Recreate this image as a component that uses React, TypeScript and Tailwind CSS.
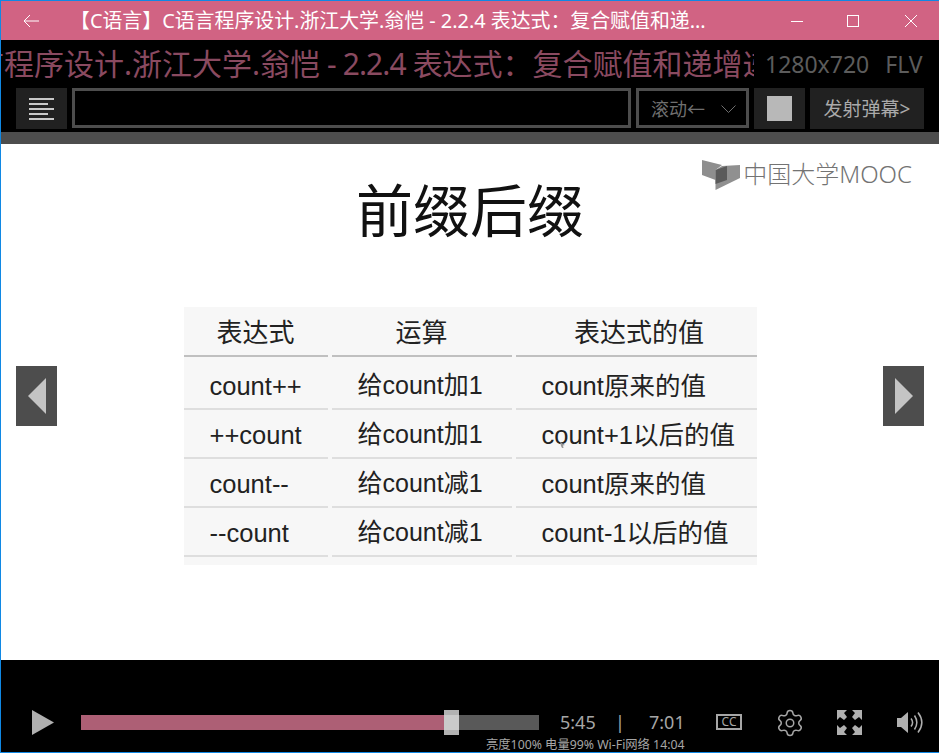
import { Settings } from "lucide-react"

const cjk = "font-['Noto_Sans','Noto_Sans_CJK_SC',sans-serif]"
const slide = "font-['Liberation_Sans','Noto_Sans_CJK_SC',sans-serif]"

const rows = [
  ["count++", "给count加1", "count原来的值"],
  ["++count", "给count加1", "count+1以后的值"],
  ["count--", "给count减1", "count原来的值"],
  ["--count", "给count减1", "count-1以后的值"],
]

function WindowControls() {
  return (
    <div className="flex items-center text-white">
      <svg width="57" height="14" viewBox="0 0 57 14" className="-mr-[1px]">
        <path d="M0 7.5H12" stroke="currentColor" fill="none" />
      </svg>
      <svg width="57" height="14" viewBox="0 0 57 14">
        <rect x="0.5" y="1.5" width="11" height="11" stroke="currentColor" fill="none" />
      </svg>
      <svg width="14" height="14" viewBox="0 0 14 14">
        <path d="M1 1L13 13M13 1L1 13" stroke="currentColor" fill="none" />
      </svg>
    </div>
  )
}

function SideArrow({ dir }: { dir: "left" | "right" }) {
  return (
    <div className="w-[41px] h-[60px] bg-[#4d4d4d] flex items-center justify-center">
      <svg width="18" height="36" viewBox="0 0 18 36" className="text-[#c4c4c4]">
        <path d={dir === "left" ? "M18 0V36L0 18Z" : "M0 0V36L18 18Z"} fill="currentColor" />
      </svg>
    </div>
  )
}

export default function App() {
  return (
    <div className={`w-[939px] h-[753px] flex flex-col overflow-hidden border-t border-l border-b border-[#1088e4] bg-black ${cjk}`}>
      {/* title bar */}
      <div className="h-[39px] shrink-0 bg-[#d16383] flex items-center pl-[22px] pr-[21px] text-white">
        <svg width="16" height="14" viewBox="0 0 16 14" className="shrink-0">
          <path d="M7 1L1 7L7 13M1 7H16" stroke="currentColor" fill="none" />
        </svg>
        <div className="ml-[31px] w-[680px] text-[19.9px] leading-[24px] whitespace-nowrap">
          【C语言】C语言程序设计.浙江大学.翁恺 - 2.2.4 表达式：复合赋值和递...
        </div>
        <div className="ml-auto">
          <WindowControls />
        </div>
      </div>

      {/* marquee + video info */}
      <div className="h-[48px] shrink-0 flex items-center">
        <div className="w-[753px] overflow-hidden whitespace-nowrap text-[30px] leading-[40px] text-[#8a4a60]">
          <span className="block -ml-[27px]">
            言程序设计.浙江大学.翁恺<span className="tracking-[-0.9px]"> - 2.2.4 </span>表达式：复合赋值和递增递
          </span>
        </div>
        <div className="ml-[11px] text-[23px] leading-[30px] text-[#5c5c5c] whitespace-nowrap">1280x720</div>
        <div className="ml-[16px] text-[23px] leading-[30px] text-[#5c5c5c]">FLV</div>
      </div>

      {/* danmaku toolbar */}
      <div className="h-[44px] shrink-0 flex gap-[5px] pl-[15px]">
        <div className="w-[51px] h-[41px] bg-[#212121] flex items-center justify-center">
          <svg width="25" height="22" viewBox="0 0 25 22" className="text-[#c8c8c8]">
            <path d="M0 1H25M0 6H19M0 11H25M0 16H19M0 21H25" stroke="currentColor" strokeWidth="2" fill="none" />
          </svg>
        </div>
        <div className="w-[559px] h-[40px] border-[3px] border-[#4d4d4d]" />
        <div className="w-[113px] h-[40px] border-[3px] border-[#4d4d4d] flex items-center pl-[12px] pt-[1px] text-[#6f6f6f]">
          <span className="text-[18px] leading-[24px] whitespace-nowrap">滚动←</span>
          <svg width="15" height="8" viewBox="0 0 15 8" className="ml-[16px] shrink-0">
            <path d="M0.5 0.5L7.5 7.5L14.5 0.5" stroke="currentColor" fill="none" />
          </svg>
        </div>
        <div className="w-[51px] h-[41px] bg-[#212121] flex items-center justify-center">
          <div className="w-[25px] h-[25px] bg-[#b8b8b8]" />
        </div>
        <div className="w-[114px] h-[41px] bg-[#212121] flex items-center justify-center pt-[1px] text-[#aaaaaa] text-[19px] whitespace-nowrap">
          发射弹幕&gt;
        </div>
      </div>
      <div className="h-[12px] shrink-0 bg-[#4d4d4d]" />

      {/* video */}
      <div className={`relative h-[516px] shrink-0 bg-white flex flex-col items-center ${slide}`}>
        <div className="absolute right-[27px] top-[16px] flex items-start gap-[3px] text-[#737373]">
          <svg width="38" height="30" viewBox="0 0 38 30" className="shrink-0">
            <path d="M0 0L20 5L13.5 10V20L0 15Z" fill="#8e8e8e" />
            <path d="M20 6L38 5V18L13.5 30V10Z" fill="#909090" />
            <path d="M13.5 10L25 6V20L13.5 24Z" fill="#5a5a5a" />
          </svg>
          <span className={`text-[24px] leading-[28px] font-light whitespace-nowrap ${cjk}`}>中国大学MOOC</span>
        </div>

        <h1 className="mt-[32px] text-[57px] leading-[72px] text-[#111] font-normal">前缀后缀</h1>

        <div className="mt-[59px] w-[573px] pb-[8px] bg-[#f7f7f7] text-[#222] text-[25.5px] grid grid-cols-[144px_180px_241px] gap-x-[4px]">
          {["表达式", "运算", "表达式的值"].map((head, i) => (
            <div
              key={head}
              className={`h-[50px] pt-[4px] border-b-2 border-[#c0c0c0] flex items-center justify-center text-[26px] ${i === 2 ? "pl-[6px]" : ""}`}
            >
              {head}
            </div>
          ))}
          {rows.map((row, r) =>
            row.map((cell, i) => (
              <div
                key={row[0] + i}
                className={`border-b-2 border-[#dedede] flex items-center whitespace-nowrap pl-[26px] ${r === 0 ? "h-[53px] pt-[7px]" : "h-[49px] pt-[3px]"} ${i === 1 ? "text-[25px]" : ""}`}
              >
                {cell}
              </div>
            ))
          )}
        </div>

        {/* stray cursor in the recording */}
        <svg width="5" height="6" viewBox="0 0 5 6" className="absolute left-[559px] top-[298px] text-[#9a9a9a]">
          <path d="M0 0L5 3L3 3.5L3.5 6L2 6L1 4Z" fill="currentColor" />
        </svg>

        <div className="absolute left-[15px] top-[222px]">
          <SideArrow dir="left" />
        </div>
        <div className="absolute left-[882px] top-[222px]">
          <SideArrow dir="right" />
        </div>
      </div>

      {/* player controls */}
      <div className="relative flex-1 flex items-start pt-[50px] pl-[31px]">
        <svg width="22" height="25" viewBox="0 0 22 25" className="text-[#b0b0b0] shrink-0">
          <path d="M0 0V25L22 12.5Z" fill="currentColor" />
        </svg>
        <div className="ml-[27px] mt-[5px] w-[458px] h-[15px] bg-[#595959] shrink-0 relative">
          <div className="h-full w-[370px] bg-[#ad5f75]" />
          <div className="absolute left-[363px] -top-[5px] w-[15px] h-[25px] bg-[#b2b2b2] flex items-center">
            <div className="w-full h-[15px] bg-[#cacaca]" />
          </div>
        </div>
        <div className="ml-[21px] w-[35px] text-[18px] leading-[25px] text-[#a6a6a6]">5:45</div>
        <div className="ml-[20px] w-[6px] text-[18px] leading-[25px] text-[#a6a6a6]">|</div>
        <div className="ml-[28px] w-[35px] text-[18px] leading-[25px] text-[#a6a6a6]">7:01</div>
        <div className="ml-[32px] mt-[4px] w-[26px] h-[16px] border-2 border-[#a6a6a6] flex items-center justify-center text-[#a6a6a6] text-[12px] leading-none">
          CC
        </div>
        <Settings className="ml-[33px] -mt-[2px] w-[30px] h-[30px] text-[#a6a6a6]" strokeWidth={1.2} />
        <svg width="25" height="25" viewBox="0 0 25 25" className="ml-[32px] text-[#b0b0b0]">
          <path d="M0 0H10L7 3L10 7L7 10L3 7L0 10ZM25 0H15L18 3L15 7L18 10L22 7L25 10ZM0 25H10L7 22L10 18L7 15L3 18L0 15ZM25 25H15L18 22L15 18L18 15L22 18L25 15Z" fill="currentColor" />
        </svg>
        <svg width="27" height="25" viewBox="0 0 27 25" className="ml-[35px] text-[#b0b0b0]">
          <path d="M0 8H4L11 2V23L4 17H0Z" fill="currentColor" />
          <path d="M14 8.5C16 11 16 14 14 16.5M17.5 5.5C20.5 10 20.5 15 17.5 19.5M21 2.5C26 9 26 16 21 22.5" stroke="currentColor" strokeWidth="1.5" fill="none" />
        </svg>
        <div className="absolute left-[485px] bottom-0 text-[12.3px] leading-[15px] text-[#a6a6a6] whitespace-nowrap">
          亮度100% 电量99% Wi-Fi网络 14:04
        </div>
      </div>
    </div>
  )
}
